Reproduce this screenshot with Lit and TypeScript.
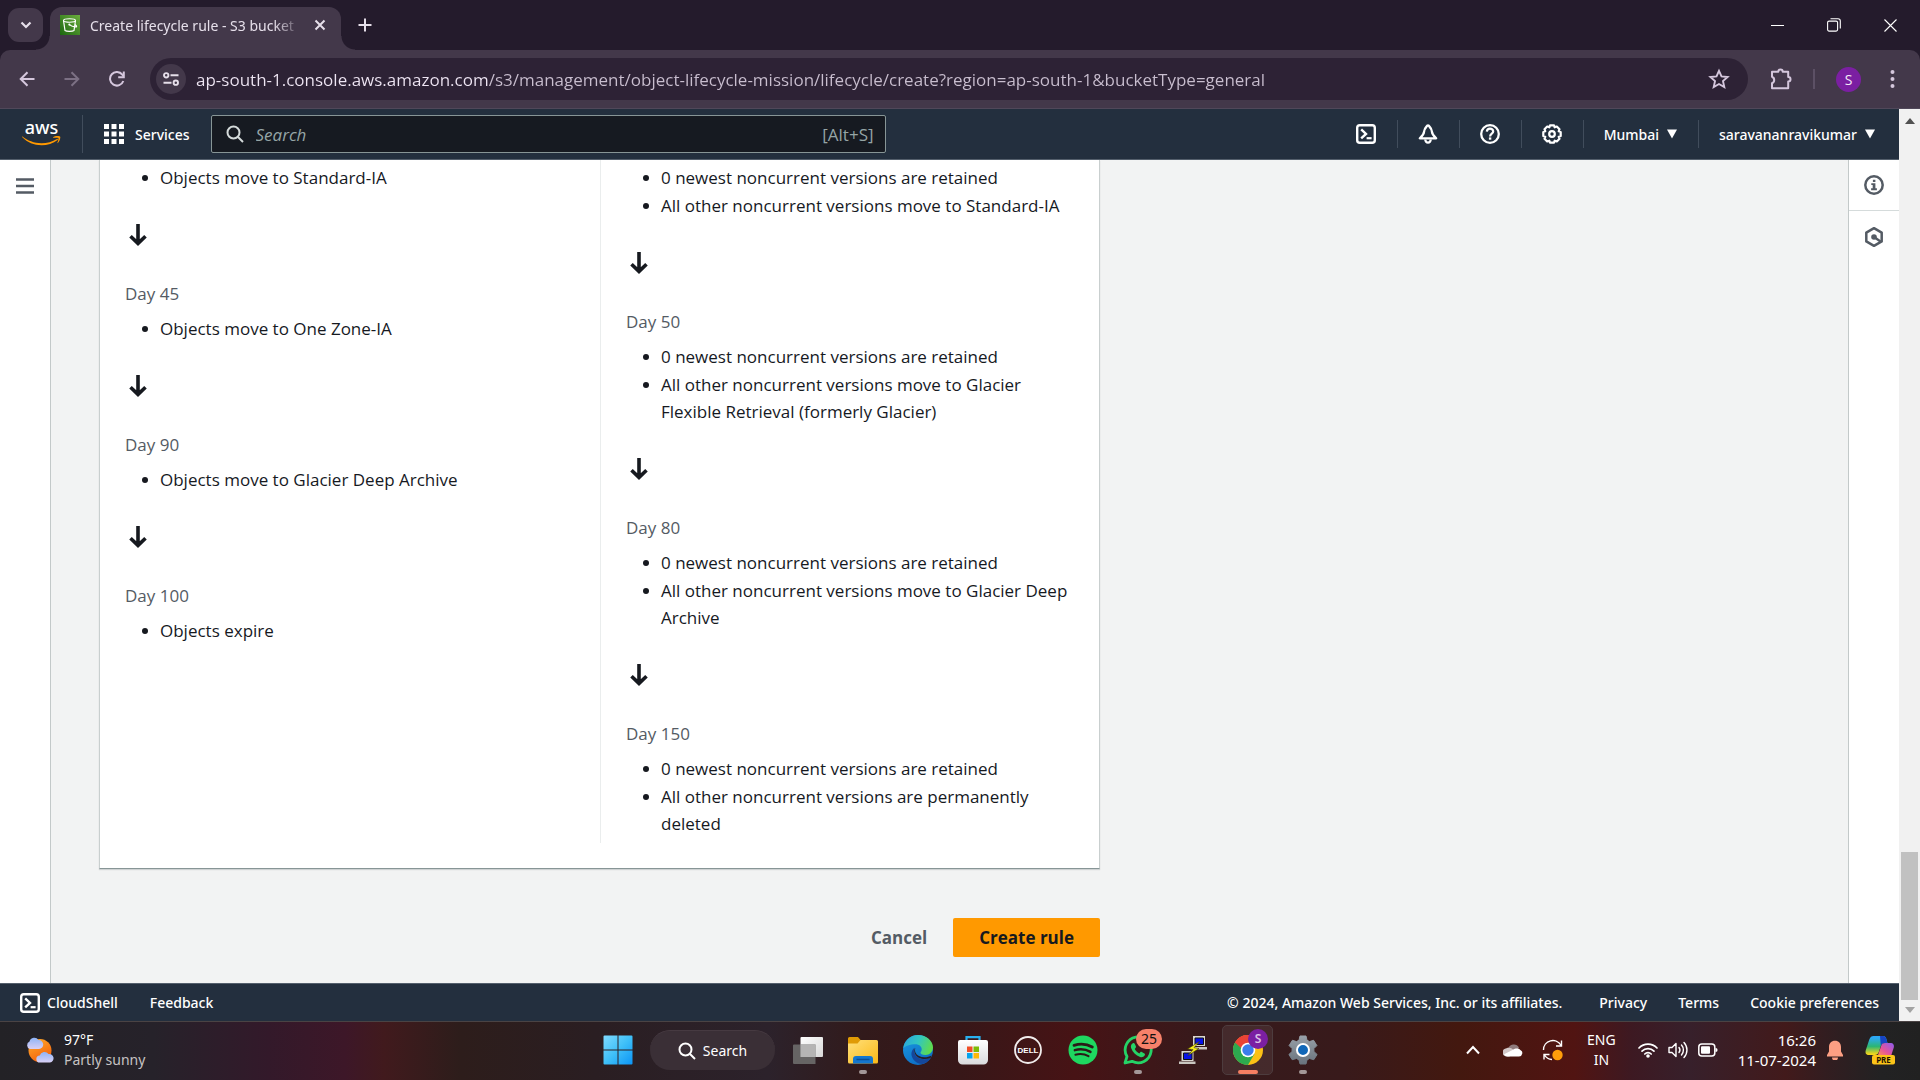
import { LitElement, html, css, svg, TemplateResult } from "lit";
import { customElement } from "lit/decorators.js";

interface Stage {
  day?: string;
  actions: string[];
}

const CURRENT: Stage[] = [
  { actions: ["Objects move to Standard-IA"] },
  { day: "Day 45", actions: ["Objects move to One Zone-IA"] },
  { day: "Day 90", actions: ["Objects move to Glacier Deep Archive"] },
  { day: "Day 100", actions: ["Objects expire"] },
];

const RETAINED = "0 newest noncurrent versions are retained";

const NONCURRENT: Stage[] = [
  { actions: [RETAINED, "All other noncurrent versions move to Standard-IA"] },
  {
    day: "Day 50",
    actions: [RETAINED, "All other noncurrent versions move to Glacier Flexible Retrieval (formerly Glacier)"],
  },
  { day: "Day 80", actions: [RETAINED, "All other noncurrent versions move to Glacier Deep Archive"] },
  { day: "Day 150", actions: [RETAINED, "All other noncurrent versions are permanently deleted"] },
];

const icon = (w: number, h: number, body: unknown, box = `0 0 ${w} ${h}`) =>
  html`<svg class="icon" width=${w} height=${h} viewBox=${box} fill="none" aria-hidden="true">${body}</svg>`;

const shellIcon = icon(20, 20, svg`
  <rect x="1.2" y="1.2" width="17.6" height="17.6" rx="2.6" stroke="currentColor" stroke-width="2.4"/>
  <path d="M5.2 5.4 10 10l-4.8 4.4" stroke="currentColor" stroke-width="2.4"/>
  <path d="M10.6 14.2h5" stroke="currentColor" stroke-width="2.2"/>`);

const searchIcon = (size: number, width: number) => icon(size, size, svg`
  <circle cx="7.5" cy="7.5" r="6" stroke="currentColor" stroke-width=${width}/>
  <path d="M12 12l5 5" stroke="currentColor" stroke-width=${width}/>`, "0 0 18 18");

const downArrow = icon(18, 22, svg`
  <path d="M9 0v19M1.5 12.2 9 19.4l7.500-7.200" stroke="currentColor" stroke-width="3.600"/>`);

const caret = icon(10, 10, svg`<path d="M0 .5h10L5 9.500z" fill="currentColor"/>`);

@customElement("lifecycle-timeline")
export class LifecycleTimeline extends LitElement {
  static properties = { stages: { attribute: false } };
  declare stages: Stage[];

  constructor() {
    super();
    this.stages = [];
  }

  static styles = css`
    :host {
      display: block;
      color: #16191f;
      font-size: 17px;
      line-height: 27px;
    }
    .day {
      margin: 32px 0 8px;
      color: #545b64;
    }
    ul {
      display: flex;
      flex-direction: column;
      gap: 1px;
      margin: 0;
      padding: 0 0 0 35px;
      list-style: none;
    }
    li::before {
      content: "";
      float: left;
      width: 6px;
      height: 6px;
      margin: 11px 0 0 -18px;
      border-radius: 50%;
      background: #16191f;
    }
    .arrow {
      display: flex;
      align-items: center;
      height: 27px;
      margin-top: 30px;
      padding-left: 4px;
    }
    .icon {
      display: block;
    }
  `;

  render() {
    return this.stages.map(
      (stage, i) => html`
        ${i > 0 ? html`<div class="arrow">${downArrow}</div>` : null}
        ${stage.day ? html`<p class="day">${stage.day}</p>` : null}
        <ul>
          ${stage.actions.map((a) => html`<li>${a}</li>`)}
        </ul>
      `
    );
  }
}

interface TaskItem {
  label: string;
  art: TemplateResult;
  state?: "open" | "active";
  badge?: TemplateResult;
}

const TASKS: TaskItem[] = [
  {
    label: "Task view",
    art: icon(30, 30, svg`
      <defs><linearGradient id="tv" x1="0" y1="0" x2="1" y2="1"><stop stop-color="#fff"/><stop offset="1" stop-color="#d8d8d8"/></linearGradient></defs>
      <rect x="7.500" y="2" width="22.500" height="20" rx="1" fill="url(#tv)"/>
      <path d="M0 10.500A1 1 0 0 1 1 9.500H22.500V29H1a1 1 0 0 1-1-1z" fill="#6d6b6b" fill-opacity=".9"/>
      <path d="M7.500 9.500h15V22h-15z" fill="#b5b4b4"/>`),
  },
  {
    label: "File Explorer",
    state: "open",
    art: icon(30, 30, svg`
      <defs><linearGradient id="fe" x1="0" y1="0" x2="1" y2="1"><stop stop-color="#ffe07a"/><stop offset="1" stop-color="#fbb917"/></linearGradient></defs>
      <path d="M0 3.500A1.500 1.500 0 0 1 1.500 2h8.500l3 3.500V10H0z" fill="#e09b05"/>
      <path d="M0 8.500h9.500l3-3.500H28.500A1.500 1.500 0 0 1 30 6.500V27a1.500 1.500 0 0 1-1.500 1.500h-27A1.500 1.500 0 0 1 0 27z" fill="url(#fe)"/>
      <path d="M5 28.500V24a3 3 0 0 1 3-3h14a3 3 0 0 1 3 3v4.500z" fill="#1477ce"/>
      <path d="M8.500 24.500h13" stroke="#0b4f96" stroke-width="1.500"/>`),
  },
  {
    label: "Microsoft Edge",
    art: icon(30, 30, svg`
      <defs>
        <linearGradient id="e1" x1="0" y1=".2" x2="1" y2=".5"><stop stop-color="#2aa5dd"/><stop offset=".5" stop-color="#32c6c0"/><stop offset="1" stop-color="#5fdc4c"/></linearGradient>
        <linearGradient id="e2" x1="0" y1="0" x2=".6" y2="1"><stop stop-color="#1b9de2"/><stop offset="1" stop-color="#0d6bc4"/></linearGradient>
      </defs>
      <circle cx="15" cy="15" r="15" fill="url(#e2)"/>
      <path d="M.3 13.500C1.200 5.500 7.500 0 15 0c8.500 0 15 6 15 12.500 0 4.500-3.500 7.500-7.500 7.500-3.500 0-5-1.200-5-2.300 0-.8 1.200-1.400 1.200-3.400 0-2.800-2.600-5-6.200-5C7 9.300 2 11 .3 13.500z" fill="url(#e1)"/>
      <path d="M11.700 12.800c-3 2-4.200 6-2.400 9.700 1.900 4 6 6.500 10 6.400 3.500-.6 6.800-2.900 8.500-5.900-6.200 2.500-15.300 1.300-16.600-6-.2-1.600 0-3 .5-4.200z" fill="#14479b"/>
      <path d="M12.300 13c-.9 3 .2 6.400 3.700 8 4 1.900 9 1.300 12.600-.6l-1 2.600c-5.700 2.200-13.500 1-15.800-4.500-.8-2.300-.5-4.300.5-5.500z" fill="#2b1d23"/>`),
  },
  {
    label: "Microsoft Store",
    art: icon(30, 30, svg`
      <defs><linearGradient id="ms" x1="0" y1="0" x2="0" y2="1"><stop stop-color="#fff"/><stop offset="1" stop-color="#d9dadd"/></linearGradient></defs>
      <path d="M8.500 7V2.200h13V7" stroke="#29b0ef" stroke-width="2.200"/>
      <path d="M0 7a2 2 0 0 1 2-2h26a2 2 0 0 1 2 2v18a4.500 4.500 0 0 1-4.500 4.500h-21A4.500 4.500 0 0 1 0 25z" fill="url(#ms)"/>
      <path d="M9 11.500h5.500V17H9z" fill="#f04e26"/><path d="M15.500 11.500H21V17h-5.500z" fill="#7dbb06"/>
      <path d="M9 18h5.500v5.500H9z" fill="#05a4ee"/><path d="M15.500 18H21v5.500h-5.500z" fill="#fdb80a"/>`),
  },
  {
    label: "Dell",
    art: icon(30, 30, svg`
      <circle cx="15" cy="15" r="13" stroke="#f1ecec" stroke-width="1.800"/>
      <text x="15" y="18" text-anchor="middle" font-family="Liberation Sans, sans-serif" font-size="8" font-weight="700" fill="#fff">DELL</text>`),
  },
  {
    label: "Spotify",
    art: icon(30, 30, svg`
      <circle cx="15" cy="15" r="14.500" fill="#1ed760"/>
      <path d="M6 10.300c6.500-1.900 13-1.300 18.300 1.700" stroke="#2a1a17" stroke-width="2.800" stroke-linecap="round"/>
      <path d="M6.800 15.200c5.500-1.600 11-1 15.700 1.700" stroke="#2a1a17" stroke-width="2.400" stroke-linecap="round"/>
      <path d="M7.400 19.700c4.600-1.300 9.200-.8 13.100 1.500" stroke="#2a1a17" stroke-width="2" stroke-linecap="round"/>`),
  },
  {
    label: "WhatsApp",
    state: "open",
    badge: html`<span class="count">25</span>`,
    art: icon(30, 30, svg`
      <path d="M2 28l2-6.500A13 13 0 1 1 9 26.300z" stroke="#25d366" stroke-width="2.800" stroke-linejoin="round"/>
      <path d="M9.500 8.500c-1.400 1-2 2.600-1.400 4.500 1.500 4.300 4.700 7.500 9 9 2 .6 3.800-.2 4.700-1.700.4-.8.200-1.500-.4-1.900l-2.600-1.500c-.6-.3-1.100-.2-1.500.3l-1 1.200c-2-.9-3.700-2.500-4.600-4.400l1-1.200c.4-.5.4-.9.200-1.500l-1.200-2.600c-.4-.8-1.300-.9-2.200-.2z" fill="#25d366"/>`),
  },
  {
    label: "PuTTY",
    art: icon(30, 30, svg`
      <path d="M15 1h12v10H15z" fill="#d8d5cf"/><path d="M17 3h8.500v6.500H17z" fill="#0712e8" stroke="#111" stroke-width="1"/>
      <path d="M13 12h16v2.500H13z" fill="#c9c6c0"/>
      <path d="M3.500 16h12v10h-12z" fill="#d8d5cf"/><path d="M5.500 18H14v6.500H5.500z" fill="#0712e8" stroke="#111" stroke-width="1"/>
      <path d="M1 26.500h16.500V29H1z" fill="#c9c6c0"/>
      <path d="M21.500 6.500 9.500 14l5.500.5-5 6L21 13.500l-5-.8z" fill="#f7ee1c" stroke="#3a3408" stroke-width=".6"/>`),
  },
  {
    label: "Google Chrome",
    state: "active",
    badge: html`<span class="user">S</span>`,
    art: icon(30, 30, svg`
      <circle cx="15" cy="15" r="15" fill="#fbc116"/>
      <path d="M15 15 2 7.500A15 15 0 0 1 28 7.500H15z" fill="#ea4335"/>
      <path d="M2 7.500A15 15 0 0 0 15 30l6.500-11.250L15 15z" fill="#2da94f"/>
      <path d="M2 7.500 9 19l6-4z" fill="#2da94f"/><path d="M2 7.500A15 15 0 0 1 15 0v7.500L8 13z" fill="#ea4335"/>
      <circle cx="15" cy="15" r="7.300" fill="#fff"/><circle cx="15" cy="15" r="5.700" fill="#3b7ded"/>`),
  },
  {
    label: "Settings",
    state: "open",
    art: icon(30, 30, svg`
      <defs><linearGradient id="st" x1="0" y1="0" x2="0" y2="1"><stop stop-color="#98a0a8"/><stop offset="1" stop-color="#69737d"/></linearGradient></defs>
      <path d="M12 1h6l1 4.200 2.500 1.400L25.600 5.300l3.300 5.300-3 3v2.900l3.200 3-3.300 5.200-4.300-1.200-2.500 1.400L18 29h-6l-1-4.100-2.500-1.400-4.300 1.200L.9 19.500l3.200-3v-2.900l-3-3 3.300-5.300 4.100 1.300L11 5.200z" fill="url(#st)" stroke="url(#st)" stroke-linejoin="round"/>
      <circle cx="15" cy="15" r="6" fill="#1167b8" stroke="#fff" stroke-width="2"/>`),
  },
];

@customElement("task-bar")
export class TaskBar extends LitElement {
  static styles = css`
    :host {
      display: grid;
      grid-template-columns: 1fr auto 1fr;
      align-items: center;
      height: 59px;
      box-sizing: border-box;
      padding-bottom: 2px;
      border-top: 1px solid #4a4344;
      color: #fff;
      font-family: "Noto Sans", sans-serif;
      font-size: 14px;
      line-height: 20px;
      background: linear-gradient(90deg, #232226 0%, #26222a 8%, #33192a 14%, #3d1728 18%, #411a1d 20%,
        #2d1d1b 24%, #2a1e22 31%, #2c222b 40%, #321a1b 45%, #371718 50%, #471315 56%, #361a1c 63%,
        #381a1b 70%, #43180f 76%, #511412 82%, #3d1922 85%, #37202b 88%, #421a1b 93%, #331d20 95%, #222223 98%, #212121 100%);
    }
    button {
      display: flex;
      align-items: center;
      justify-content: center;
      margin: 0;
      padding: 0;
      border: 0;
      color: inherit;
      background: none;
      font: inherit;
    }
    .icon {
      display: block;
      flex: none;
    }
    .weather {
      justify-self: start;
      gap: 10px;
      padding-left: 26px;
      text-align: left;
    }
    .weather .sub {
      color: #c6c2c3;
    }
    .apps,
    .tray {
      display: flex;
      align-items: center;
    }
    .app {
      position: relative;
      width: 55px;
      height: 50px;
    }
    .active::before {
      content: "";
      position: absolute;
      inset: 0 2px;
      border: 1px solid #4d3c3e;
      border-radius: 5px;
      background: #ffffff12;
    }
    .app .icon {
      position: relative;
    }
    .open::after,
    .active::after {
      content: "";
      position: absolute;
      bottom: 1px;
      width: 8px;
      height: 4px;
      border-radius: 2px;
      background: #a39798;
    }
    .active::after {
      width: 20px;
      background: #f67f63;
    }
    .count,
    .user {
      position: absolute;
      top: 4px;
      box-sizing: border-box;
      height: 20px;
      border-radius: 10px;
      text-align: center;
    }
    .count {
      left: 26px;
      width: 26px;
      color: #111;
      background: #f6816a;
    }
    .user {
      left: 28px;
      width: 20px;
      color: #dcc0e6;
      background: #7b1fa2;
      font-size: 12px;
      font-weight: 600;
    }
    .search {
      gap: 7px;
      width: 125px;
      height: 40px;
      margin: 0 5px;
      box-sizing: border-box;
      border-radius: 20px;
      border-top: 1px solid #463a41;
      background: #3a2f36;
      font-size: 14px;
    }
    .tray {
      justify-self: end;
      padding-right: 25px;
    }
    .up { margin-right: 23px; }
    .cloud { margin-right: 19px; }
    .sync { margin-right: 23px; }
    .lang {
      flex-direction: column;
      margin-right: 22px;
    }
    .status {
      gap: 10px;
      margin-right: 20px;
    }
    .clock {
      display: block;
      margin-right: 10px;
      text-align: right;
      font-size: 15px;
    }
    .bell { margin-right: 21px; }
  `;

  render() {
    return html`
      <button class="weather">
        ${icon(28, 26, svg`
          <defs>
            <linearGradient id="sun" x1="0" y1="0" x2=".5" y2="1"><stop stop-color="#ffb02e"/><stop offset="1" stop-color="#f4620c"/></linearGradient>
            <linearGradient id="cl" x1="0" y1="0" x2="0" y2="1"><stop stop-color="#8fb4f7"/><stop offset="1" stop-color="#d9d0f5"/></linearGradient>
          </defs>
          <circle cx="14" cy="13.500" r="11.500" fill="url(#sun)"/>
          <path d="M4 12a4 4 0 0 1-.5-7.500A5 5 0 0 1 12.500 3 4.500 4.500 0 0 1 13 12z" fill="url(#cl)"/>
          <path d="M14 25.500a3.500 3.500 0 0 1-.3-7A5 5 0 0 1 22.500 17a4.300 4.300 0 0 1 1.500 8.500z" fill="url(#cl)"/>`)}
        <span>97°F<br /><span class="sub">Partly sunny</span></span>
      </button>
      <div class="apps">
        <button class="app" aria-label="Start">
          ${icon(30, 30, svg`
            <defs><linearGradient id="win" gradientUnits="userSpaceOnUse" x1="0" y1="0" x2="30" y2="30"><stop stop-color="#82dcff"/><stop offset=".5" stop-color="#3fc0f8"/><stop offset="1" stop-color="#0a93f5"/></linearGradient></defs>
            <path d="M.5 1.500A1 1 0 0 1 1.500.5H14.500V14.500H.5zM15.500.5H28.500a1 1 0 0 1 1 1V14.500h-14zM.5 15.500h14v14h-13a1 1 0 0 1-1-1zM15.500 15.500h14v13a1 1 0 0 1-1 1h-13z" fill="url(#win)"/>`)}
        </button>
        <button class="search">${searchIcon(18, 2)}Search</button>
        ${TASKS.map(
          (t) => html`<button class="app ${t.state ?? ""}" aria-label=${t.label}>${t.art}${t.badge ?? null}</button>`
        )}
      </div>
      <div class="tray">
        <button class="up" aria-label="Show hidden icons">
          ${icon(14, 10, svg`<path d="M1 8.500 7 2l6 6.500" stroke="currentColor" stroke-width="2"/>`)}
        </button>
        <button class="cloud" aria-label="OneDrive">
          ${icon(20, 14, svg`<path d="M5 6A6 6 0 0 1 16 4.500L12 9z" fill="#8f7b7c"/>
            <path d="M4 13.500a4 4 0 0 1-.5-8.300c3-1 5 0 7 1.600l-4 6.700z" fill="#d2c8c8"/>
            <path d="M1 11.300 10 6.800c2-1.500 5.500-2 7.300.2a3.400 3.400 0 0 1-1.300 6.500H4.500c-1.500 0-2.700-.8-3.500-2.200z" fill="#fff"/>`)}
        </button>
        <button class="sync" aria-label="Updates">
          ${icon(22, 22, svg`<path d="M1.500 11A9.300 9.300 0 0 1 19 6.500M19.500 1.500v5.500h-5.500" stroke="#fff" stroke-width="1.400"/>
            <path d="M2 20.500V15.500h5.500M2.500 16a9.500 9.500 0 0 0 7.500 4.500" stroke="#fff" stroke-width="1.400"/>
            <circle cx="15.500" cy="16" r="5.200" fill="#ff9d0a"/>`)}
        </button>
        <button class="lang"><span>ENG</span><span>IN</span></button>
        <button class="status" aria-label="Network, volume and battery">
          ${icon(20, 16, svg`<g stroke="#fff" stroke-width="1.700" stroke-linecap="round"><path d="M1 6a12.500 12.500 0 0 1 18 0"/><path d="M4 9.200a8.500 8.500 0 0 1 12 0"/><path d="M6.800 12a4.500 4.500 0 0 1 6.400 0"/></g><circle cx="10" cy="14" r="1.800" fill="#fff"/>`)}
          ${icon(20, 18, svg`<path d="M1 6.500h3l4-4v13l-4-4H1z" stroke="#fff" stroke-width="1.400" stroke-linejoin="round"/><path d="M11 6.500a4 4 0 0 1 0 5M13.500 4a7.500 7.500 0 0 1 0 10M16 1.500a11 11 0 0 1 0 15" stroke="#fff" stroke-width="1.400" stroke-linecap="round"/>`)}
          ${icon(20, 14, svg`<rect x=".8" y="1" width="16" height="12" rx="3" stroke="#fff" stroke-width="1.500"/><rect x="3" y="3.200" width="9" height="7.600" rx="1" fill="#fff"/><path d="M17.500 5c1.500 0 2 .7 2 2s-.5 2-2 2z" fill="#fff"/>`)}
        </button>
        <button class="clock">16:26<br />11-07-2024</button>
        <button class="bell" aria-label="Notifications">
          ${icon(18, 20, svg`<path d="M9 .8c3.700 0 6 2.700 6 6.200v4.500l2 3.500v1.500H1V15l2-3.500V7C3 3.500 5.300.8 9 .8zM6 17.500h6a3 3 0 0 1-6 0z" fill="#fd9f83"/>`)}
        </button>
        <button aria-label="Copilot preview">
          ${icon(30, 30, svg`
            <defs>
              <linearGradient id="c1" x1="0" y1="0" x2="0" y2="1"><stop offset=".1" stop-color="#2ca9f5"/><stop offset=".55" stop-color="#2bb673"/><stop offset=".95" stop-color="#f3d51c"/></linearGradient>
              <linearGradient id="c2" x1="1" y1="0" x2="0" y2="1"><stop stop-color="#8a5cf0"/><stop offset=".6" stop-color="#e5549b"/><stop offset="1" stop-color="#fb8a5b"/></linearGradient>
            </defs>
            <path d="M8.500 1H18c2.500 0 3 1.500 3.800 4.500L22.500 8h-3c-2 0-3 1-3.700 3l-2 6c-.7 2-2 3-4 3H4C.5 20 0 17.500 1 14.500l3.300-10C5.200 2 6.500 1 8.500 1z" fill="url(#c1)"/>
            <path d="M15 1h3c2.500 0 3 1.500 3.800 4.500L22.500 8h-3c-2 0-3 1-3.700 3z" fill="#1745c4"/>
            <path d="M20 8h5c3.500 0 4.500 2 3.600 5l-2.200 7H13l3.500-10c.6-1.300 1.800-2 3.500-2z" fill="url(#c2)"/>
            <rect x="7" y="20" width="23" height="9.500" rx="2" fill="#fcc419"/>
            <text x="18.500" y="27.500" text-anchor="middle" font-family="Noto Sans, sans-serif" font-size="8" font-weight="700" fill="#1b1400">PRE</text>`)}
        </button>
      </div>
    `;
  }
}

@customElement("app-root")
export class AppRoot extends LitElement {
  static styles = css`
    :host {
      display: flex;
      flex-direction: column;
      height: 100vh;
      overflow: hidden;
      font-family: "Open Sans", "Noto Sans", sans-serif;
      color: #16191f;
      background: #241b2c;
    }
    button,
    input {
      margin: 0;
      padding: 0;
      border: 0;
      color: inherit;
      background: none;
      font: inherit;
    }
    button {
      display: flex;
      align-items: center;
      justify-content: center;
    }
    a {
      color: inherit;
      text-decoration: none;
    }
    .icon {
      display: block;
      flex: none;
    }

    /* Browser tabs */
    .tabs {
      display: flex;
      align-items: center;
      height: 50px;
      padding-left: 8px;
      color: #e6dfea;
      font-family: "Noto Sans", sans-serif;
    }
    .tab-list {
      width: 35px;
      height: 34px;
      border-radius: 11px;
      background: #43384a;
    }
    .tab {
      position: relative;
      display: flex;
      align-items: center;
      align-self: flex-end;
      box-sizing: border-box;
      width: 291px;
      height: 43px;
      margin-left: 7px;
      padding: 0 15px 7px 10px;
      border-radius: 12px 12px 0 0;
      background: #43384a;
      font-size: 14px;
    }
    .tab::before,
    .tab::after {
      content: "";
      position: absolute;
      bottom: 0;
      width: 14px;
      height: 14px;
    }
    .tab::before {
      left: -14px;
      background: radial-gradient(circle at 0 0, transparent 13px, #43384a 14px);
    }
    .tab::after {
      right: -14px;
      background: radial-gradient(circle at 100% 0, transparent 13px, #43384a 14px);
    }
    .tab-title {
      flex: 1;
      margin: 0 15px 0 10px;
      overflow: hidden;
      white-space: nowrap;
      mask-image: linear-gradient(90deg, #000 184px, transparent 212px);
    }
    .new-tab {
      margin-left: 17px;
    }
    .window {
      display: flex;
      align-items: center;
      gap: 43px;
      margin: 0 23px 0 auto;
      color: #fff;
    }

    /* Address bar */
    .toolbar {
      display: flex;
      align-items: center;
      box-sizing: border-box;
      height: 59px;
      padding: 0 25px 0 19px;
      border-bottom: 1px solid #50485a;
      border-radius: 10px 10px 0 0;
      color: #d5c7dd;
      background: #43384a;
    }
    .back { margin-right: 29px; }
    .forward {
      margin-right: 29px;
      color: #7c7084;
    }
    .reload { margin-right: 25px; }
    .omnibox {
      display: flex;
      flex: 1;
      align-items: center;
      height: 42px;
      margin-right: 22px;
      padding: 0 17px 0 6px;
      border-radius: 21px;
      background: #2d2235;
    }
    .site {
      width: 30px;
      height: 30px;
      margin-right: 10px;
      border-radius: 50%;
      color: #e6dfea;
      background: #43384a;
    }
    .omnibox input {
      flex: 1;
      min-width: 0;
      outline: 0;
      font-size: 17px;
      color: transparent;
      background: linear-gradient(90deg, #efe6f4 292px, #c9becf 292px);
      background-clip: text;
    }
    .bar {
      width: 2px;
      height: 20px;
      margin: 0 21px;
      background: #5c5065;
    }
    .avatar {
      width: 25px;
      height: 25px;
      margin-right: 29px;
      border-radius: 50%;
      color: #f3e9f7;
      background: #7b1fa2;
      font-size: 14px;
    }

    /* Page viewport beside its scrollbar */
    .viewport {
      display: flex;
      flex: 1;
      min-height: 0;
      background: #f2f3f3;
    }
    .page {
      display: flex;
      flex: 1;
      flex-direction: column;
      min-width: 0;
    }
    .scrollbar {
      display: flex;
      flex-direction: column;
      align-items: center;
      box-sizing: border-box;
      width: 21px;
      padding: 9px 0 8px;
      background: #f1f1f1;
    }
    .thumb {
      width: 17px;
      height: 148px;
      margin: auto 0 7px;
      background: #c1c1c1;
    }

    /* Console header */
    .console-nav {
      display: flex;
      align-items: center;
      box-sizing: border-box;
      height: 51px;
      padding-left: 22px;
      border-bottom: 1px solid #545f6c;
      color: #fff;
      background: #232f3e;
      font-family: "Noto Sans", sans-serif;
      font-size: 14px;
      font-weight: 500;
    }
    .divided {
      margin-right: 21px;
      padding-right: 21px;
      border-right: 1px solid #414d5c;
    }
    .services {
      gap: 11px;
      margin-right: 21px;
    }
    .find {
      display: flex;
      align-items: center;
      box-sizing: border-box;
      flex: 0 1 675px;
      height: 38px;
      padding: 0 11px 0 14px;
      border: 1px solid #879596;
      border-radius: 2px;
      color: #95a5a6;
      background: #161a21;
      font-family: "Open Sans", sans-serif;
      font-size: 17px;
      font-weight: 400;
    }
    .find .icon {
      margin-right: 12px;
      color: #d5dbdb;
    }
    .find input {
      flex: 1;
      min-width: 0;
      outline: 0;
    }
    .find input::placeholder {
      color: #95a5a6;
      font-style: italic;
    }
    .tools {
      display: flex;
      align-items: center;
      margin-left: auto;
      padding-right: 3px;
    }
    .tools button {
      gap: 8px;
      height: 28px;
      padding: 0 21px 0 20px;
    }
    .tools button + button {
      border-left: 1px solid #414d5c;
    }

    /* Console body */
    .body {
      display: flex;
      flex: 1;
      min-height: 0;
      overflow: hidden;
      color: #545b64;
    }
    .rail {
      flex: none;
      background: #fff;
    }
    .left {
      width: 50px;
      border-right: 1px solid #c3c9c9;
    }
    .right {
      width: 50px;
      border-left: 1px solid #c3c9c9;
    }
    .rail button {
      width: 100%;
      height: 51px;
    }
    .right button:first-child {
      border-bottom: 1px solid #d5dbdb;
    }
    .content {
      flex: 1;
      padding: 0 48px;
    }
    .form {
      max-width: 1001px;
    }
    .card {
      padding: 0 24px 25px 25px;
      border: 1px solid #c9cfcf;
      border-top: 0;
      border-bottom-color: #879596;
      background: #fff;
      box-shadow: 0 1px 1px #001c2426;
    }
    .columns {
      display: grid;
      grid-template-columns: 1fr 1fr;
    }
    .columns lifecycle-timeline {
      padding: 4px 0 6px;
    }
    .columns lifecycle-timeline + lifecycle-timeline {
      padding-left: 25px;
      border-left: 1px solid #eaeded;
    }
    .actions {
      display: flex;
      justify-content: flex-end;
      padding-top: 49px;
      font-size: 17px;
      font-weight: 700;
    }
    .actions button {
      height: 39px;
      padding: 0 26px;
      border-radius: 2px;
    }
    .actions .primary {
      color: #16191f;
      background: #ff9900;
    }

    /* Console footer */
    .console-footer {
      display: flex;
      align-items: center;
      gap: 31px;
      box-sizing: border-box;
      height: 38px;
      padding: 0 20px;
      border-top: 1px solid #545f6c;
      color: #fff;
      background: #232f3e;
      font-family: "Noto Sans", sans-serif;
      font-size: 14px;
      font-weight: 500;
    }
    .shell {
      gap: 7px;
      margin-right: 1px;
    }
    .console-footer small {
      margin: 0 6px 0 auto;
      font-size: 14px;
    }
  `;

  private renderBrowser() {
    return html`
      <div class="tabs">
        <button class="tab-list" aria-label="Search tabs">
          ${icon(12, 8, svg`<path d="M1.500 1.500 6 6l4.500-4.500" stroke="currentColor" stroke-width="2.200"/>`)}
        </button>
        <div class="tab">
          ${icon(20, 20, svg`
            <defs><linearGradient id="fav" x1="0" y1="1" x2="1" y2="0"><stop stop-color="#1b660f"/><stop offset="1" stop-color="#6cae3e"/></linearGradient></defs>
            <path d="M0 0h20v20H0z" fill="url(#fav)"/>
            <ellipse cx="9.500" cy="5.500" rx="6" ry="1.700" stroke="#fff" stroke-width="1.100"/>
            <path d="M3.500 5.500 5 15.500c1.500 1.300 7.500 1.300 9 0l1.500-10M9 9.500c2 1.500 5 2.500 7.500 2.300.5-.8-.7-1.800-1.600-2.300" stroke="#fff" stroke-width="1.200"/>
            <circle cx="9.300" cy="9.500" r="1" fill="#fff"/>`)}
          <span class="tab-title">Create lifecycle rule - S3 bucket</span>
          <button aria-label="Close tab">
            ${icon(12, 12, svg`<path d="M1.500 1.500l9 9M10.500 1.500l-9 9" stroke="currentColor" stroke-width="2"/>`)}
          </button>
        </div>
        <button class="new-tab" aria-label="New tab">
          ${icon(14, 14, svg`<path d="M7 .5v13M.5 7h13" stroke="currentColor" stroke-width="2"/>`)}
        </button>
        <div class="window">
          <button aria-label="Minimise">${icon(13, 13, svg`<path d="M0 6.500h13" stroke="currentColor"/>`)}</button>
          <button aria-label="Restore">
            ${icon(14, 14, svg`<rect x=".6" y="3.100" width="10" height="10" rx="1.500" stroke="currentColor" stroke-width="1.100"/><path d="M3.500.8H11a2.300 2.300 0 0 1 2.300 2.300v7.500" stroke="currentColor" stroke-width="1.100"/>`)}
          </button>
          <button aria-label="Close">${icon(13, 13, svg`<path d="M.5.5l12 12M12.500.5l-12 12" stroke="currentColor" stroke-width="1.100"/>`)}</button>
        </div>
      </div>
      <div class="toolbar">
        <button class="back" aria-label="Back">
          ${icon(16, 16, svg`<path d="M15.500 8H2M8.500 1.200 1.700 8l6.800 6.800" stroke="currentColor" stroke-width="2"/>`)}
        </button>
        <button class="forward" aria-label="Forward">
          ${icon(16, 16, svg`<path d="M.5 8H14M7.500 1.200 14.300 8l-6.800 6.800" stroke="currentColor" stroke-width="2"/>`)}
        </button>
        <button class="reload" aria-label="Reload">
          ${icon(16, 16, svg`<path d="M14.300 10A6.800 6.800 0 1 1 13.300 3.700L14.500 5.200" stroke="currentColor" stroke-width="2"/><path d="M14.800.5v5.700H9.200" stroke="currentColor" stroke-width="2"/>`)}
        </button>
        <div class="omnibox">
          <button class="site" aria-label="View site information">
            ${icon(16, 14, svg`<g stroke="currentColor" stroke-width="1.900"><circle cx="3.200" cy="3.300" r="2.200"/><path d="M7.500 3.300H15.500M.5 10.700H8.500"/><circle cx="12.800" cy="10.700" r="2.200"/></g>`)}
          </button>
          <input
            type="text"
            aria-label="Address"
            .value=${"ap-south-1.console.aws.amazon.com/s3/management/object-lifecycle-mission/lifecycle/create?region=ap-south-1&bucketType=general"}
          />
          <button aria-label="Bookmark this page">
            ${icon(24, 24, svg`<path d="M12 3.800l2.500 5.600 6.100.6-4.600 4.100 1.300 6L12 17l-5.300 3.100 1.300-6L3.400 10l6.100-.6z" stroke="#d5c7dd" stroke-width="1.900"/>`)}
          </button>
        </div>
        <button aria-label="Extensions">
          ${icon(22, 24, svg`<path d="M2 4.800h6.300a2.200 2.200 0 0 1 4.400 0H18.200V10a2.300 2.300 0 0 1 0 4.600v6.600H2V16.300a3.500 3.500 0 0 0 0-6.500z" stroke="currentColor" stroke-width="2" stroke-linejoin="round"/>`)}
        </button>
        <span class="bar"></span>
        <button class="avatar" aria-label="Profile">S</button>
        <button aria-label="Browser menu">
          ${icon(5, 20, svg`<g fill="currentColor"><circle cx="2.500" cy="3" r="2"/><circle cx="2.500" cy="10" r="2"/><circle cx="2.500" cy="17" r="2"/></g>`)}
        </button>
      </div>
    `;
  }

  private renderNav() {
    return html`
      <header class="console-nav">
        <a class="divided" href="#home" aria-label="AWS home">
          ${icon(39, 38, svg`
            <text x="19.500" y="19" text-anchor="middle" font-family="Noto Sans, sans-serif" font-size="18" font-weight="500" fill="#fff">aws</text>
            <g transform="translate(0 4)">
              <path d="M.5 17.500c5 4 11.500 6.700 19 6.700 5.500 0 11-1.500 15.500-4.300.8-.4 1.300.4.600 1-4.400 3.600-10.400 5.300-16 5.300-7.600 0-14.300-2.900-19.300-8-.4-.5-.2-1 .2-.7z" fill="#f90"/>
              <path d="M31 18.300c1.800-1.300 4.400-1.500 6.500-1 .7.200.9.600.8 1.300-.2 2-1 4.200-2.400 5.500-.3.200-.6 0-.5-.3.600-1.600 1.500-4 1-4.700-.6-.7-3.500-.4-5-.3-.4 0-.6-.2-.4-.5z" fill="#f90"/>
            </g>`)}
        </a>
        <button class="services">
          ${icon(20, 20, svg`<path d="M0 0h5v5H0zM7.500 0h5v5h-5zM15 0h5v5h-5zM0 7.500h5v5H0zM7.500 7.500h5v5h-5zM15 7.500h5v5h-5zM0 15h5v5H0zM7.500 15h5v5h-5zM15 15h5v5h-5z" fill="currentColor"/>`)}
          Services
        </button>
        <label class="find">
          ${searchIcon(18, 2)}
          <input type="text" placeholder="Search" aria-label="Search services" />
          <span>[Alt+S]</span>
        </label>
        <div class="tools">
          <button aria-label="CloudShell">${shellIcon}</button>
          <button aria-label="Notifications">
            ${icon(20, 20, svg`<path d="M10 1.500c-.8 0-1.200.4-1.500 1.100C7.200 4 6.300 5 6.100 7.500 5.900 10.500 4.500 12 1.800 14.300H18.200C15.500 12 14.100 10.500 13.900 7.500 13.700 5 12.800 4 11.500 2.600 11.200 1.900 10.800 1.500 10 1.500z" stroke="currentColor" stroke-width="2.300" stroke-linejoin="round"/><path d="M7.300 15.500a2.700 3.200 0 0 0 5.400 0" stroke="currentColor" stroke-width="2.300"/>`)}
          </button>
          <button aria-label="Help">
            ${icon(20, 20, svg`<circle cx="10" cy="10" r="8.800" stroke="currentColor" stroke-width="2.300"/><path d="M6.800 7.700C7 5.700 8.300 4.700 10 4.700s3.200 1.100 3.200 2.800c0 2.200-3.100 2.300-3.100 5" stroke="currentColor" stroke-width="2.200"/><path d="M8.900 13.400h2.400v2.300H8.900z" fill="currentColor"/>`)}
          </button>
          <button aria-label="Settings">
            ${icon(20, 20, svg`<path d="M8 1.300h4l.7 2 2.100-.8 2.700 2.700-.8 2.100 2 .7v4l-2 .7.800 2.100-2.700 2.700-2.100-.8-.7 2H8l-.7-2-2.100.8-2.700-2.700.8-2.100-2-.7V8l2-.7-.8-2.100 2.700-2.700 2.100.8z" stroke="currentColor" stroke-width="2.200" stroke-linejoin="round"/><circle cx="10" cy="10" r="2.800" stroke="currentColor" stroke-width="2.200"/>`)}
          </button>
          <button>Mumbai ${caret}</button>
          <button>saravananravikumar ${caret}</button>
        </div>
      </header>
    `;
  }

  render() {
    return html`
      ${this.renderBrowser()}
      <div class="viewport">
        <div class="page">
          ${this.renderNav()}
          <div class="body">
            <nav class="rail left">
              <button aria-label="Open navigation">
                ${icon(18, 16, svg`<path d="M0 1.500h18M0 8h18M0 14.500h18" stroke="currentColor" stroke-width="2.400"/>`)}
              </button>
            </nav>
            <main class="content">
              <div class="form">
                <section class="card">
                  <div class="columns">
                    <lifecycle-timeline .stages=${CURRENT}></lifecycle-timeline>
                    <lifecycle-timeline .stages=${NONCURRENT}></lifecycle-timeline>
                  </div>
                </section>
                <div class="actions">
                  <button>Cancel</button>
                  <button class="primary">Create rule</button>
                </div>
              </div>
            </main>
            <aside class="rail right">
              <button aria-label="Info">
                ${icon(20, 20, svg`<circle cx="10" cy="10" r="8.700" stroke="currentColor" stroke-width="2.500"/><path d="M8.900 4.800h2.500V7H8.900zM7.300 8.300h4.100v5h1.500v1.900H7.100v-1.900h1.600V10H7.300z" fill="currentColor"/>`)}
              </button>
              <button aria-label="Diagnostics">
                ${icon(20, 20, svg`<path d="M10 1.200 17.700 5.600v8.800L10 18.800 2.300 14.400V5.600z" stroke="currentColor" stroke-width="2.500" stroke-linejoin="round"/><circle cx="10" cy="10" r="2.800" fill="currentColor"/><path d="M10 10l6.500 4.500" stroke="currentColor" stroke-width="2.300"/>`)}
              </button>
            </aside>
          </div>
          <footer class="console-footer">
            <button class="shell">${shellIcon} CloudShell</button>
            <button>Feedback</button>
            <small>© 2024, Amazon Web Services, Inc. or its affiliates.</small>
            <a href="#privacy">Privacy</a>
            <a href="#terms">Terms</a>
            <a href="#cookies">Cookie preferences</a>
          </footer>
        </div>
        <div class="scrollbar">
          ${icon(10, 6, svg`<path d="M0 6h10L5 0z" fill="#505050"/>`)}
          <div class="thumb"></div>
          ${icon(10, 6, svg`<path d="M0 0h10L5 6z" fill="#a3a3a3"/>`)}
        </div>
      </div>
      <task-bar></task-bar>
    `;
  }
}
